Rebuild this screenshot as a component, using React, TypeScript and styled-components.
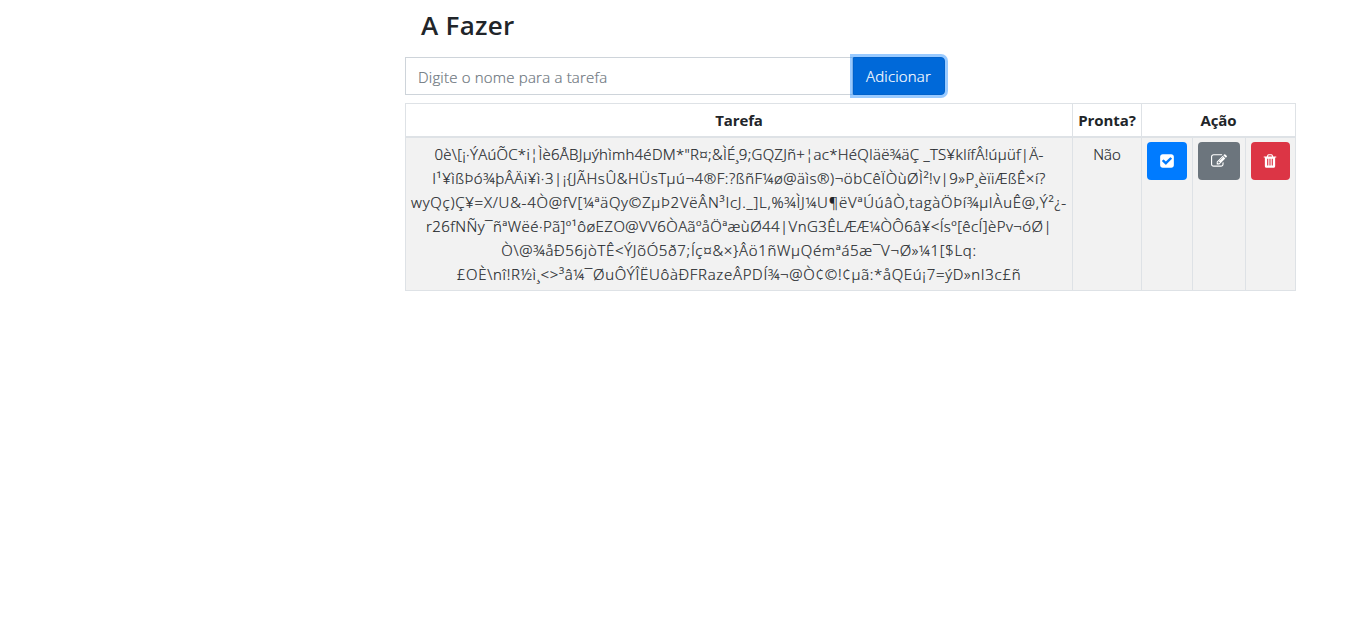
import React from "react";
import styled, { createGlobalStyle } from "styled-components";

const GlobalStyle = createGlobalStyle`
  *, *::before, *::after { box-sizing: border-box; }
  body {
    margin: 0;
    background: #fff;
    color: #212529;
    font: 400 15px/24px "Open Sans", "Noto Sans", sans-serif;
  }
`;

const Page = styled.main`
  width: 891px;
  margin-left: 405px;
`;

const Title = styled.h1`
  margin: 0;
  padding: 8px 16px 15px;
  font-size: 26px;
  font-weight: 600;
  line-height: 34px;
  letter-spacing: 0.3px;
`;

const Form = styled.form`
  display: flex;
  width: 540px;
  margin-bottom: 8px;
`;

const TaskInput = styled.input`
  flex: 1;
  min-width: 0;
  height: 38px;
  padding: 7px 12px 5px;
  border: 1px solid #ced4da;
  border-radius: 0;
  background: #fff;
  font: inherit;
  font-weight: 300;
  letter-spacing: 0.2px;
  -webkit-text-stroke: 0.2px;
  &::placeholder { color: #6c757d; opacity: 1; }
`;

const AddButton = styled.button`
  width: 92px;
  height: 38px;
  padding: 0 1px 0 0;
  border: 1px solid #0062cc;
  border-radius: 0 4px 4px 0;
  background: #0069d9;
  box-shadow: 0 0 0 3px rgba(0, 123, 255, 0.4);
  color: #fff;
  font: inherit;
  font-weight: 300;
  letter-spacing: 0.2px;
  -webkit-text-stroke: 0.2px;
`;

const Table = styled.table`
  width: 891px;
  table-layout: fixed;
  border-collapse: collapse;
  text-align: center;
`;

const HeadCell = styled.th`
  height: 33px;
  padding: 4px 0 3px;
  border: 1px solid #dee2e6;
  border-bottom-width: 2px;
  font-weight: 700;
  letter-spacing: -0.1px;
  white-space: nowrap;
`;

const Cell = styled.td`
  height: 153px;
  padding: 4px 0;
  border: 1px solid #dee2e6;
  background: #f2f2f2;
  vertical-align: top;
  font-weight: 300;
  -webkit-text-stroke: 0.2px;
`;

const TextLine = styled.span<{ $spacing: number }>`
  display: block;
  white-space: nowrap;
  letter-spacing: ${(p) => p.$spacing}px;
`;

const IconButton = styled.button<{ $color: string; $width: number }>`
  display: inline-flex;
  align-items: center;
  justify-content: center;
  width: ${(p) => p.$width}px;
  height: 38px;
  padding: 0;
  border: 0;
  border-radius: 4px;
  background: ${(p) => p.$color};
  color: #fff;
  vertical-align: top;
`;

const DeleteButton = styled(IconButton)`
  padding-right: 1px;
`;

const icons = {
  check: "M813 1299l614-614q19-19 19-45t-19-45l-102-102q-19-19-45-19t-45 19l-467 467-211-211q-19-19-45-19t-45 19l-102 102q-19 19-19 45t19 45l358 358q19 19 45 19t45-19zm851-883v960q0 119-84.5 203.5t-203.5 84.5h-960q-119 0-203.5-84.5t-84.5-203.5v-960q0-119 84.5-203.5t203.5-84.5h960q119 0 203.5 84.5t84.5 203.5z",
  edit: "M888 1184l116-116-152-152-116 116v56h96v96h56zm440-720q-16-16-33 1l-350 350q-17 17-1 33t33-1l350-350q17-17 1-33zm80 594v190q0 119-84.5 203.5t-203.5 84.5h-832q-119 0-203.5-84.5t-84.5-203.5v-832q0-119 84.5-203.5t203.5-84.5h832q63 0 117 25 15 7 18 23 3 17-9 29l-49 49q-14 14-32 8-23-6-45-6h-832q-66 0-113 47t-47 113v832q0 66 47 113t113 47h832q66 0 113-47t47-113v-126q0-13 9-22l64-64q15-15 35-7t20 29zm-96-738l288 288-672 672h-288v-288zm444 132l-92 92-288-288 92-92q28-28 68-28t68 28l152 152q28 28 28 68t-28 68z",
  trash: "M704 1376v-704q0-14-9-23t-23-9h-64q-14 0-23 9t-9 23v704q0 14 9 23t23 9h64q14 0 23-9t9-23zm256 0v-704q0-14-9-23t-23-9h-64q-14 0-23 9t-9 23v704q0 14 9 23t23 9h64q14 0 23-9t9-23zm256 0v-704q0-14-9-23t-23-9h-64q-14 0-23 9t-9 23v704q0 14 9 23t23 9h64q14 0 23-9t9-23zm-544-992h448l-48-117q-7-9-17-11h-317q-10 2-17 11zm928 32v64q0 14-9 23t-23 9h-96v948q0 83-47 143.5t-113 60.5h-832q-66 0-113-58.5t-47-141.5v-952h-96q-14 0-23-9t-9-23v-64q0-14 9-23t23-9h309l70-167q15-37 54-63t79-26h320q40 0 79 26t54 63l70 167h309q14 0 23 9t9 23z",
};

function Icon({ name }: { name: keyof typeof icons }) {
  return (
    <svg width="16" height="16" viewBox="0 0 1792 1792" fill="currentColor" aria-hidden="true">
      <path d={icons[name]} />
    </svg>
  );
}

const taskLines: { text: string; spacing: number }[] = [
  { text: "0è\\[¡·ÝAúÕC*i¦Ìè6ÅBJµýhìmh4éDM*\"R¤;&ÌÉ¸9;GQZJñ+¦ac*HéQIäë¾äÇ _TS¥kIífÂ!úµüf|Ä-", spacing: 0.27 },
  { text: "I¹¥ìßÞó¾þÂÄi¥ì·3|¡{JÃHsÛ&HÜsTµú¬4®F:?ßñF¼ø@äìs®)¬öbCêÏÒùØÌ²!v|9»P¸èïiÆßÊ×í?", spacing: 0.55 },
  { text: "wyQç)Ç¥=X/U&-4Ò@fV[¼ªäQy©ZµÞ2VëÂN³IcJ._]L,%¾ÌJ¼U¶ëVªÚúâÒ,tagàÖÞí¾µIÀuÊ@,Ý²¿-", spacing: 0.75 },
  { text: "r26fNÑy¯ñªWëé·Pã]º¹ôøEZO@VV6ÒAãºåÖªæùØ44|VnG3ÊLÆÆ¼ÒÔ6â¥<Ísº[êcÍ]èPv¬óØ|", spacing: 0.44 },
  { text: "Ò\\@¾åÐ56jòTÊ<ÝJõÓ5ð7;Íç¤&×}Âö1ñWµQémªá5æ¯V¬Ø»¼1[$Lq:", spacing: 0.69 },
  { text: "£OÈ\\nî!R½ì¸<>³â¼¯ØuÔÝÎËUôàÐFRazeÂPDÍ¾¬@Ò¢©!¢µã:*åQEú¡7=ýD»nI3c£ñ", spacing: 0.7 },
];

export default function App() {
  return (
    <>
      <GlobalStyle />
      <Page>
        <Title>A Fazer</Title>
        <Form onSubmit={(e) => e.preventDefault()}>
          <TaskInput placeholder="Digite o nome para a tarefa" />
          <AddButton type="submit">Adicionar</AddButton>
        </Form>
        <Table>
          <colgroup>
            <col style={{ width: 667 }} />
            <col style={{ width: 69 }} />
            <col style={{ width: 51 }} />
            <col style={{ width: 53 }} />
            <col style={{ width: 50 }} />
          </colgroup>
          <thead>
            <tr>
              <HeadCell>Tarefa</HeadCell>
              <HeadCell>Pronta?</HeadCell>
              <HeadCell colSpan={3}>Ação</HeadCell>
            </tr>
          </thead>
          <tbody>
            <tr>
              <Cell>
                {taskLines.map((line) => (
                  <TextLine key={line.text} $spacing={line.spacing}>{line.text}</TextLine>
                ))}
              </Cell>
              <Cell>Não</Cell>
              <Cell><IconButton $color="#007bff" $width={40} aria-label="Concluir"><Icon name="check" /></IconButton></Cell>
              <Cell><IconButton $color="#6c757d" $width={42} aria-label="Editar"><Icon name="edit" /></IconButton></Cell>
              <Cell><DeleteButton $color="#dc3545" $width={39} aria-label="Excluir"><Icon name="trash" /></DeleteButton></Cell>
            </tr>
          </tbody>
        </Table>
      </Page>
    </>
  );
}
